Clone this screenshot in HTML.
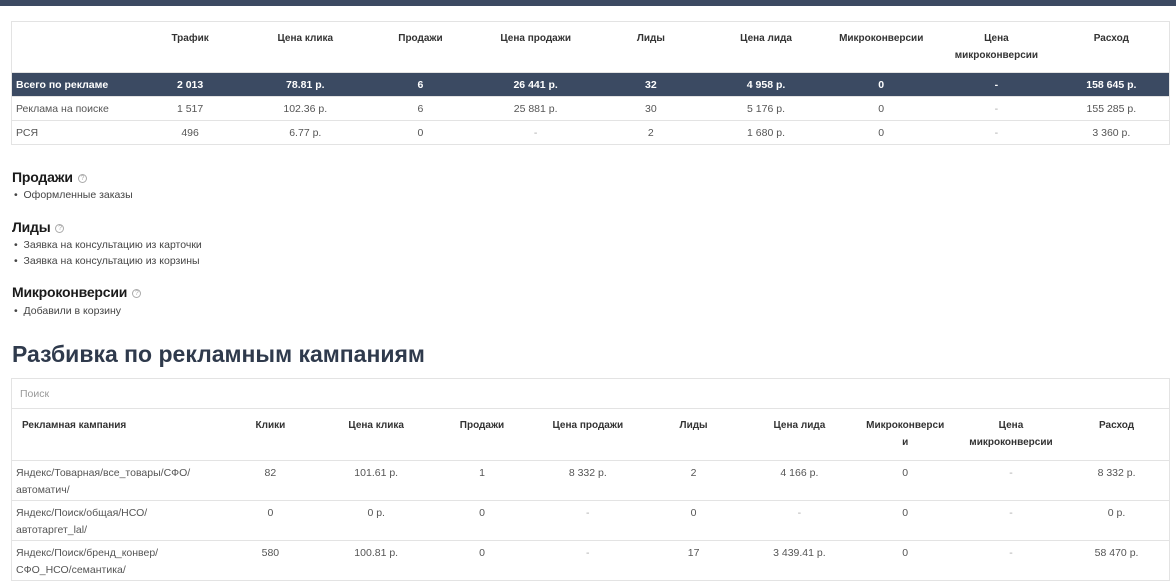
<!DOCTYPE html>
<html><head><meta charset="utf-8">
<style>
*{margin:0;padding:0;box-sizing:border-box}
body{width:1176px;height:579px;overflow:hidden;background:#fff;font-family:"Liberation Sans",sans-serif;color:#555;font-size:10.5px;position:relative}
.bar{position:absolute;left:0;top:0;width:1176px;height:6px;background:#3c4a62}
table{border-collapse:collapse;position:absolute;left:11px;width:1158px;table-layout:fixed}
td,th{text-align:center;vertical-align:top;padding:0 4px}
th{font-weight:bold;color:#333;font-size:10px;line-height:17px}
#t1{top:21px;border:1px solid #e3e3e3}
#t1 thead th{height:51px;padding-top:8px}
#t1 tr.tot td{background:#3b4a62;color:#fff;font-weight:bold;height:24px;vertical-align:middle}
#t1 tbody td{height:24px;vertical-align:middle;border-top:1px solid #e3e3e3}
#t1 td:first-child{text-align:left;padding-left:4px}
#t2{top:378px;border:1px solid #e3e3e3}
#t2 .s td{height:30px;text-align:left;vertical-align:middle;color:#999;padding-left:8px;border-bottom:1px solid #e3e3e3}
#t2 .h th{height:52px;padding-top:8px;border-bottom:1px solid #e3e3e3}
#t2 .h th:first-child{text-align:left;padding-left:10px}
#t2 .r td{height:40px;padding-top:4px;line-height:17px;border-bottom:1px solid #e3e3e3}
#t2 .r td:first-child{text-align:left;padding-left:4px}
.dash{color:#aaa}
h3{position:absolute;left:12px;font-size:14px;font-weight:900;color:#1a1a1a;letter-spacing:-0.2px}
h3 span{display:inline-block;width:9px;height:9px;border:1px solid #aaa;border-radius:50%;font-size:7px;color:#aaa;text-align:center;line-height:8px;vertical-align:middle;margin-left:5px;font-weight:normal}
.li{position:absolute;left:14px;font-size:10.5px;color:#444}
h2{position:absolute;left:12px;top:341px;font-size:23px;font-weight:bold;color:#2f3a4c}
</style></head><body>
<div class="bar"></div>
<table id="t1">
<colgroup><col style="width:121px"><col span="9" style="width:115.2px"></colgroup>
<thead><tr><th></th><th>Трафик</th><th>Цена клика</th><th>Продажи</th><th>Цена продажи</th><th>Лиды</th><th>Цена лида</th><th>Микроконверсии</th><th>Цена микроконверсии</th><th>Расход</th></tr></thead>
<tbody>
<tr class="tot"><td>Всего по рекламе</td><td>2 013</td><td>78.81 р.</td><td>6</td><td>26 441 р.</td><td>32</td><td>4 958 р.</td><td>0</td><td>-</td><td>158 645 р.</td></tr>
<tr><td>Реклама на поиске</td><td>1 517</td><td>102.36 р.</td><td>6</td><td>25 881 р.</td><td>30</td><td>5 176 р.</td><td>0</td><td class="dash">-</td><td>155 285 р.</td></tr>
<tr><td>РСЯ</td><td>496</td><td>6.77 р.</td><td>0</td><td class="dash">-</td><td>2</td><td>1 680 р.</td><td>0</td><td class="dash">-</td><td>3 360 р.</td></tr>
</tbody></table>

<h3 style="top:169px">Продажи<span>?</span></h3>
<div class="li" style="top:189px">•&nbsp;&nbsp;Оформленные заказы</div>
<h3 style="top:219px">Лиды<span>?</span></h3>
<div class="li" style="top:239px">•&nbsp;&nbsp;Заявка на консультацию из карточки</div>
<div class="li" style="top:255px">•&nbsp;&nbsp;Заявка на консультацию из корзины</div>
<h3 style="top:284px">Микроконверсии<span>?</span></h3>
<div class="li" style="top:305px">•&nbsp;&nbsp;Добавили в корзину</div>
<h2>Разбивка по рекламным кампаниям</h2>

<table id="t2">
<colgroup><col style="width:206px"><col span="9" style="width:105.8px"></colgroup>
<tr class="s"><td colspan="10">Поиск</td></tr>
<tr class="h"><th>Рекламная кампания</th><th>Клики</th><th>Цена клика</th><th>Продажи</th><th>Цена продажи</th><th>Лиды</th><th>Цена лида</th><th>Микроконверси<br>и</th><th>Цена микроконверсии</th><th>Расход</th></tr>
<tr class="r"><td>Яндекс/Товарная/все_товары/СФО/<br>автоматич/</td><td>82</td><td>101.61 р.</td><td>1</td><td>8 332 р.</td><td>2</td><td>4 166 р.</td><td>0</td><td class="dash">-</td><td>8 332 р.</td></tr>
<tr class="r"><td>Яндекс/Поиск/общая/НСО/<br>автотаргет_lal/</td><td>0</td><td>0 р.</td><td>0</td><td class="dash">-</td><td>0</td><td class="dash">-</td><td>0</td><td class="dash">-</td><td>0 р.</td></tr>
<tr class="r"><td>Яндекс/Поиск/бренд_конвер/<br>СФО_НСО/семантика/</td><td>580</td><td>100.81 р.</td><td>0</td><td class="dash">-</td><td>17</td><td>3 439.41 р.</td><td>0</td><td class="dash">-</td><td>58 470 р.</td></tr>
</table>
</body></html>
